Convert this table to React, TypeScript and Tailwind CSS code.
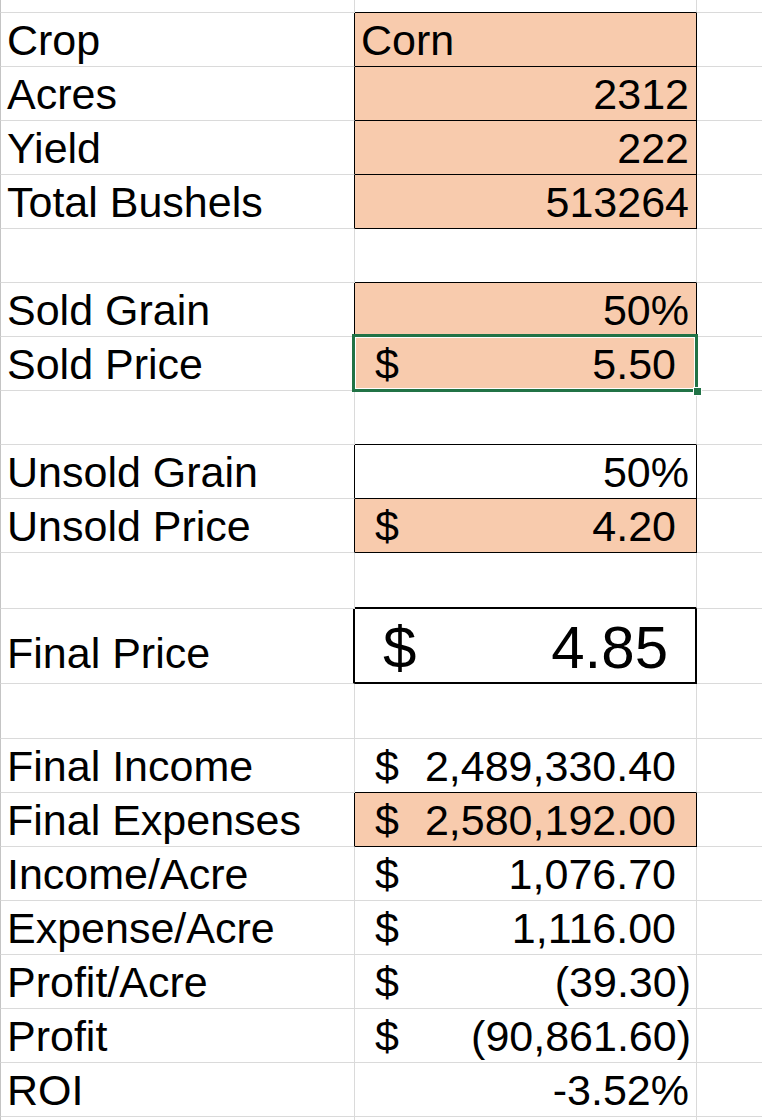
import type { ReactNode } from 'react';

type Cell =
  | { kind: 'text'; text: string }
  | { kind: 'num'; text: string }
  | { kind: 'money'; text: string; neg?: boolean }
  | { kind: 'big'; text: string };

type Row = {
  label?: string;
  h: string;
  value?: Cell;
  fill?: boolean;
  border?: 0 | 1 | 2;
  selected?: boolean;
  tall?: boolean;
};

const rows: Row[] = [
  { h: 'h-[13px]' },
  { label: 'Crop', h: 'h-[54px]', value: { kind: 'text', text: 'Corn' }, fill: true, border: 1 },
  { label: 'Acres', h: 'h-[54px]', value: { kind: 'num', text: '2312' }, fill: true, border: 1 },
  { label: 'Yield', h: 'h-[54px]', value: { kind: 'num', text: '222' }, fill: true, border: 1 },
  { label: 'Total Bushels', h: 'h-[54px]', value: { kind: 'num', text: '513264' }, fill: true, border: 1 },
  { h: 'h-[54px]' },
  { label: 'Sold Grain', h: 'h-[54px]', value: { kind: 'num', text: '50%' }, fill: true, border: 1 },
  { label: 'Sold Price', h: 'h-[54px]', value: { kind: 'money', text: '5.50' }, fill: true, border: 1, selected: true },
  { h: 'h-[54px]' },
  { label: 'Unsold Grain', h: 'h-[54px]', value: { kind: 'num', text: '50%' }, border: 1 },
  { label: 'Unsold Price', h: 'h-[54px]', value: { kind: 'money', text: '4.20' }, fill: true, border: 1 },
  { h: 'h-[56px]' },
  { label: 'Final Price', h: 'h-[75px]', value: { kind: 'big', text: '4.85' }, border: 2, tall: true },
  { h: 'h-[55px]' },
  { label: 'Final Income', h: 'h-[54px]', value: { kind: 'money', text: '2,489,330.40' } },
  { label: 'Final Expenses', h: 'h-[54px]', value: { kind: 'money', text: '2,580,192.00' }, fill: true, border: 1 },
  { label: 'Income/Acre', h: 'h-[54px]', value: { kind: 'money', text: '1,076.70' } },
  { label: 'Expense/Acre', h: 'h-[54px]', value: { kind: 'money', text: '1,116.00' } },
  { label: 'Profit/Acre', h: 'h-[54px]', value: { kind: 'money', text: '(39.30)', neg: true } },
  { label: 'Profit', h: 'h-[54px]', value: { kind: 'money', text: '(90,861.60)', neg: true } },
  { label: 'ROI', h: 'h-[54px]', value: { kind: 'num', text: '-3.52%' } },
];

function renderValue(v?: Cell): ReactNode {
  if (!v) return null;
  if (v.kind === 'text') return <span className="pl-[6px] pb-[4px]">{v.text}</span>;
  if (v.kind === 'num') return <span className="ml-auto pr-[7px] pb-[4px]">{v.text}</span>;
  if (v.kind === 'money')
    return (
      <div className="flex w-full justify-between pl-[20px] pb-[4px]">
        <span>$</span>
        <span className={v.neg ? 'pr-[5px]' : 'pr-[20px]'}>{v.text}</span>
      </div>
    );
  return (
    <div className="flex w-full justify-between pl-[28px] pr-[27px] pb-[4px] text-[60px]">
      <span>$</span>
      <span>{v.text}</span>
    </div>
  );
}

export default function App() {
  return (
    <div
      className="w-[762px] h-[1120px] overflow-hidden bg-white text-black text-[43px] leading-none"
      style={{ fontFamily: '"Liberation Sans", Arial, sans-serif' }}
    >
      {rows.map((row, i) => {
        const next = rows[i + 1];
        const nb = Math.max(row.border ?? 0, next?.border ?? 0);
        const bBottom =
          nb === 2 ? 'border-b-2 border-b-black' : nb === 1 ? 'border-b border-b-black' : 'border-b border-b-[#dadada]';
        const sideBorder =
          row.border === 2
            ? 'border-r-2 border-r-black'
            : row.border === 1
            ? 'border-r border-r-black'
            : 'border-r border-r-[#dadada]';
        return (
          <div key={i} className={`flex ${row.h}`}>
            <div
              className={`w-[355px] shrink-0 flex items-end border-l border-l-[#c4c4c4] border-b border-b-[#dadada] ${sideBorder}`}
            >
              {row.label && (
                <span className={`pl-[6px] ${row.tall ? 'pb-[8px]' : 'pb-[4px]'}`}>{row.label}</span>
              )}
            </div>
            <div
              className={`relative w-[342px] shrink-0 flex items-end ${bBottom} ${sideBorder} ${
                row.fill ? 'bg-[#f8cbad]' : 'bg-white'
              } ${row.selected ? 'z-10' : ''}`}
            >
              {renderValue(row.value)}
              {row.selected && (
                <>
                  <div className="absolute -left-[3px] -top-[3px] -right-[2px] -bottom-[2px] border-[3px] border-[#217346]">
                    <div className="w-full h-full border border-white" />
                  </div>
                  <div className="absolute -right-[6px] -bottom-[6px] w-[9px] h-[9px] bg-[#217346] border border-white" />
                </>
              )}
            </div>
            <div className="flex-1 border-b border-b-[#dadada]" />
          </div>
        );
      })}
      <div className="flex h-[4px]">
        <div className="w-[355px] shrink-0 border-l border-l-[#c4c4c4] border-r border-r-[#dadada]" />
        <div className="w-[342px] shrink-0 border-r border-r-[#dadada]" />
      </div>
    </div>
  );
}
